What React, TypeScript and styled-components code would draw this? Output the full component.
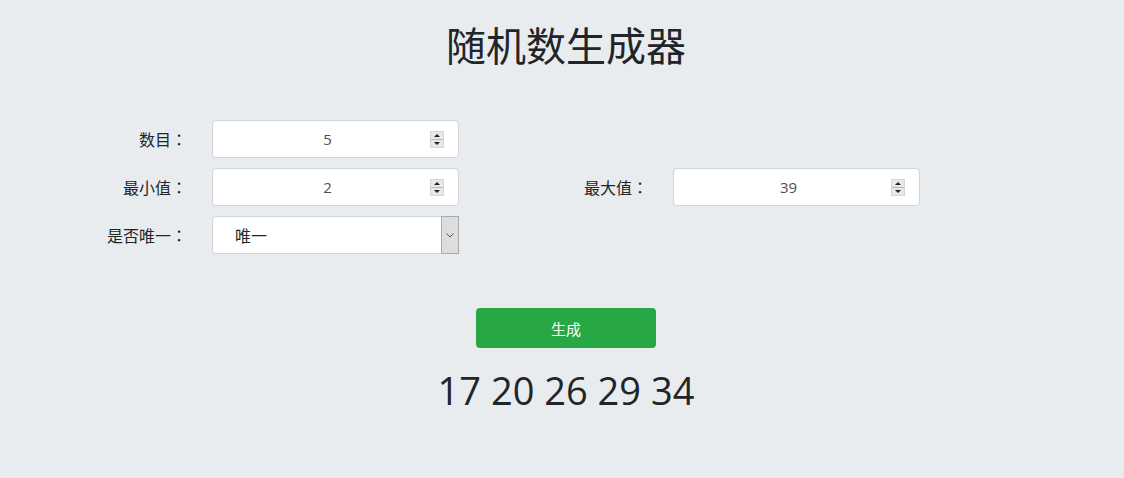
import React, { useState } from "react";
import styled, { createGlobalStyle } from "styled-components";

const GlobalStyle = createGlobalStyle`
  html, body {
    margin: 0;
    background: #e9ecef;
  }
  body {
    font-family: "Open Sans", "Noto Sans CJK SC", sans-serif;
    color: #212529;
  }
`;

const Page = styled.div`
  padding: 20px 0 40px 8px;
`;

const Title = styled.h1`
  margin: 0;
  font-size: 40px;
  line-height: 48px;
  font-weight: 400;
  text-align: center;
  font-family: "Noto Sans CJK SC", sans-serif;
`;

const Form = styled.div`
  display: flex;
  flex-direction: column;
  gap: 10px;
  margin-top: 52px;
  padding-left: 82px;
`;

const Row = styled.div`
  display: flex;
`;

const Group = styled.div`
  display: grid;
  grid-template-columns: 97px 247px;
  column-gap: 25px;
  width: 461px;
`;

const Label = styled.label`
  text-align: right;
  font-size: 16px;
  line-height: 38px;
  font-family: "Noto Sans CJK SC", sans-serif;
  white-space: nowrap;
`;

const Colon = styled.span`
  font-family: "Noto Sans CJK JP", sans-serif;
`;

const Box = styled.div<{ $clip?: boolean }>`
  display: flex;
  align-items: center;
  box-sizing: border-box;
  height: 38px;
  background: #fff;
  border: 1px solid #ced4da;
  border-radius: 4px;
  overflow: ${({ $clip }) => ($clip ? "hidden" : "visible")};
`;

const NumberInput = styled.input`
  flex: 1;
  min-width: 0;
  border: none;
  outline: none;
  background: transparent;
  padding: 0 0 0 12px;
  text-align: center;
  font-family: "Open Sans", sans-serif;
  font-size: 15px;
  color: #495057;
  -moz-appearance: textfield;
  &::-webkit-inner-spin-button,
  &::-webkit-outer-spin-button {
    -webkit-appearance: none;
    margin: 0;
  }
`;

const Spinner = styled.div`
  display: flex;
  flex-direction: column;
  width: 14px;
  height: 17px;
  margin-right: 14px;
  background: #e8e8e8;
  border: 1px solid #d6d6d6;
  box-sizing: border-box;
`;

const SpinHalf = styled.div<{ $down?: boolean }>`
  flex: 1;
  display: flex;
  align-items: center;
  justify-content: center;
  border-top: ${({ $down }) => ($down ? "1px solid #b8b8b8" : "none")};
  &::after {
    content: "";
    width: 0;
    height: 0;
    border-left: 3px solid transparent;
    border-right: 3px solid transparent;
    ${({ $down }) =>
      $down ? "border-top: 3px solid #222;" : "border-bottom: 3px solid #222;"}
  }
`;

const Select = styled.select`
  flex: 1;
  min-width: 0;
  height: 100%;
  border: none;
  outline: none;
  background: transparent;
  appearance: none;
  padding: 0 0 0 22px;
  font-family: "Noto Sans CJK SC", sans-serif;
  font-size: 16px;
  color: #212529;
`;

const ArrowBox = styled.div`
  display: flex;
  align-items: center;
  justify-content: center;
  align-self: stretch;
  width: 18px;
  margin: -1px -1px -1px 0;
  background: #dddddd;
  border: 1px solid #a9a9a9;
  box-sizing: border-box;
`;

const Actions = styled.div`
  display: flex;
  justify-content: center;
  margin-top: 54px;
`;

const Button = styled.button`
  width: 180px;
  height: 40px;
  border: none;
  border-radius: 4px;
  background: #28a745;
  color: #fff;
  font-family: "Noto Sans CJK SC", sans-serif;
  font-size: 15px;
  cursor: pointer;
`;

const Result = styled.div`
  margin-top: 19px;
  text-align: center;
  font-family: "Open Sans", sans-serif;
  font-size: 38px;
  line-height: 46px;
  color: #212529;
`;

const NumberField = ({ value }: { value: number }) => (
  <Box $clip>
    <NumberInput type="number" defaultValue={value} />
    <Spinner>
      <SpinHalf />
      <SpinHalf $down />
    </Spinner>
  </Box>
);

const FieldLabel = ({ text }: { text: string }) => (
  <Label>
    {text}
    <Colon>：</Colon>
  </Label>
);

export default function App() {
  const [result] = useState([17, 20, 26, 29, 34]);
  return (
    <Page>
      <GlobalStyle />
      <Title>随机数生成器</Title>
      <Form>
        <Row>
          <Group>
            <FieldLabel text="数目" />
            <NumberField value={5} />
          </Group>
        </Row>
        <Row>
          <Group>
            <FieldLabel text="最小值" />
            <NumberField value={2} />
          </Group>
          <Group>
            <FieldLabel text="最大值" />
            <NumberField value={39} />
          </Group>
        </Row>
        <Row>
          <Group>
            <FieldLabel text="是否唯一" />
            <Box>
              <Select defaultValue="unique">
                <option value="unique">唯一</option>
                <option value="repeat">可重复</option>
              </Select>
              <ArrowBox>
                <svg width="8" height="5" viewBox="0 0 8 5">
                  <path d="M0.5 0.5 L4 4 L7.5 0.5" fill="none" stroke="#555" strokeWidth="1" />
                </svg>
              </ArrowBox>
            </Box>
          </Group>
        </Row>
      </Form>
      <Actions>
        <Button>生成</Button>
      </Actions>
      <Result>{result.join(" ")}</Result>
    </Page>
  );
}
